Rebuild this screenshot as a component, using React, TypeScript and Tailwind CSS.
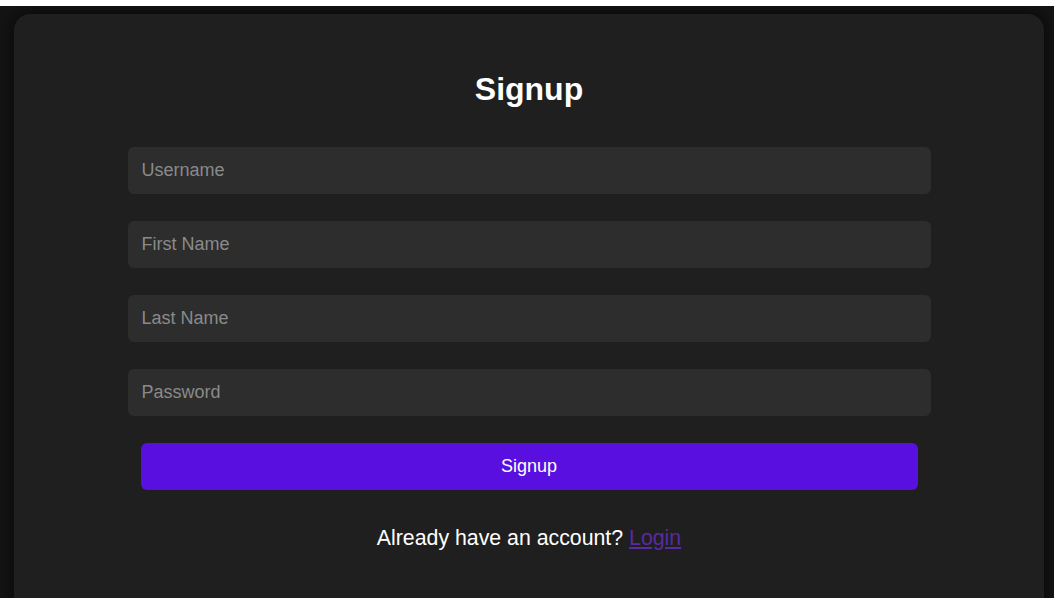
import { useState } from "react";

export default function App() {
  const [form, setForm] = useState({ username: "", firstName: "", lastName: "", password: "" });

  const fields: { key: keyof typeof form; placeholder: string; type: string }[] = [
    { key: "username", placeholder: "Username", type: "text" },
    { key: "firstName", placeholder: "First Name", type: "text" },
    { key: "lastName", placeholder: "Last Name", type: "text" },
    { key: "password", placeholder: "Password", type: "password" },
  ];

  return (
    <div className="h-[598px] overflow-hidden bg-white font-['Liberation_Sans',Arial,sans-serif]">
      <div className="h-[592px] mt-[6px] overflow-hidden bg-[#141414] pl-[14px] pr-[10px] pt-[8px]">
        <div className="h-[600px] rounded-[16px] bg-[#1f1f1f] shadow-[0_0_14px_4px_rgba(0,0,0,0.45)]">
          {/* 제목 */}
          <h1 className="pt-[56px] text-center text-[32px] leading-[38px] font-bold text-white">
            Signup
          </h1>

          {/* 입력 폼 */}
          <form
            className="mx-auto mt-[39px] flex w-[803px] flex-col gap-[27px]"
            onSubmit={(e) => e.preventDefault()}
          >
            {fields.map((f) => (
              <input
                key={f.key}
                type={f.type}
                placeholder={f.placeholder}
                value={form[f.key]}
                onChange={(e) => setForm({ ...form, [f.key]: e.target.value })}
                className="h-[47px] w-full rounded-[6px] bg-[#2d2d2d] px-[14px] text-[18px] text-white outline-none placeholder:text-[#8a8a8a]"
              />
            ))}
            <button
              type="submit"
              className="mx-[13px] h-[47px] rounded-[6px] bg-[#590fe0] text-[18px] text-white"
            >
              Signup
            </button>
          </form>

          {/* 로그인 링크 */}
          <p className="mt-[36px] text-center text-[21.3px] leading-[24px] text-white">
            Already have an account?{" "}
            <a href="#" className="text-[#5a2aa3] underline">
              Login
            </a>
          </p>
        </div>
      </div>
    </div>
  );
}
